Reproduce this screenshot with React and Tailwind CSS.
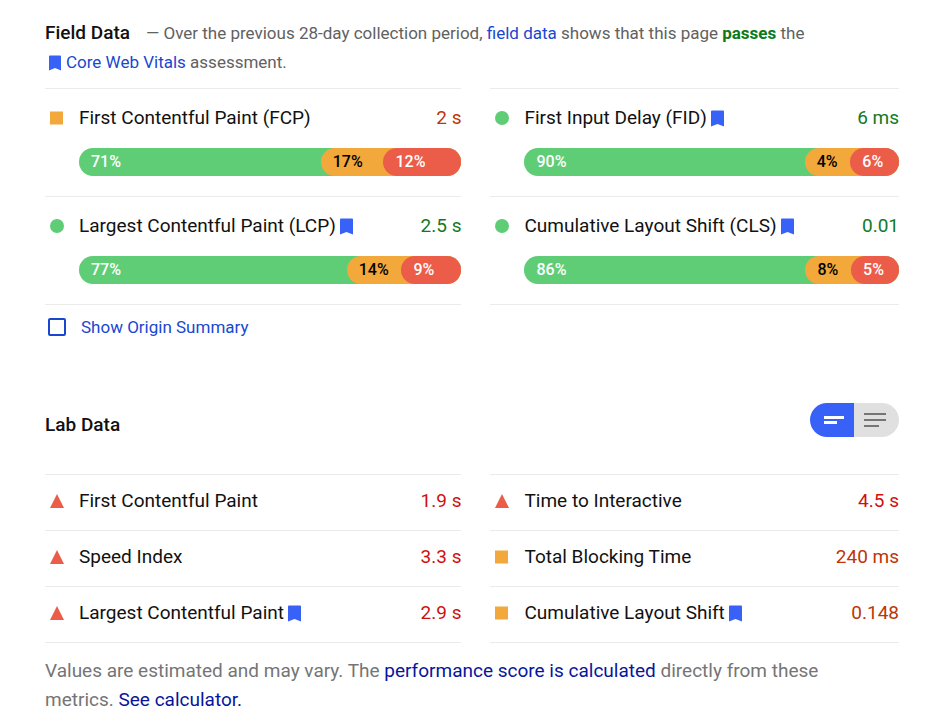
import { useState } from "react";
import clsx from "clsx";

// segments: [label, left edge of the segment in % of the bar]
const FIELD_METRICS = [
	{ name: "First Contentful Paint (FCP)", value: "2 s", rating: "average", bar: [["71%", 0], ["17%", 63.2], ["12%", 79.6]] },
	{ name: "First Input Delay (FID)", value: "6 ms", rating: "fast", vital: true, bar: [["90%", 0], ["4%", 74.8], ["6%", 87]] },
	{ name: "Largest Contentful Paint (LCP)", value: "2.5 s", rating: "fast", vital: true, bar: [["77%", 0], ["14%", 70], ["9%", 84.3]] },
	{ name: "Cumulative Layout Shift (CLS)", value: "0.01", rating: "fast", vital: true, bar: [["86%", 0], ["8%", 75], ["5%", 87.2]] },
];

const LAB_METRICS = [
	{ name: "First Contentful Paint", value: "1.9 s", rating: "slow" },
	{ name: "Time to Interactive", value: "4.5 s", rating: "slow" },
	{ name: "Speed Index", value: "3.3 s", rating: "slow" },
	{ name: "Total Blocking Time", value: "240 ms", rating: "average" },
	{ name: "Largest Contentful Paint", value: "2.9 s", rating: "slow", vital: true },
	{ name: "Cumulative Layout Shift", value: "0.148", rating: "average", vital: true },
];

const VALUE_COLORS = {
	fast: "text-[#0f7a1f]",
	average: "text-[#bd3508]",
	slow: "text-[#d01010]",
};

function Bookmark({ className }) {
	return (
		<svg viewBox="0 0 13 17" className={clsx("inline-block shrink-0 fill-[#3862f7]", className)} aria-hidden="true">
			<path d="M1 0.5h11q1 0 1 1V16.5L6.5 14L0 16.5V1.5q0-1 1-1z" />
		</svg>
	);
}

function RatingIcon({ rating }) {
	return (
		<svg viewBox="0 0 14 14" className="w-[14px] h-[14px] shrink-0" aria-hidden="true">
			{rating === "fast" && <circle cx="7" cy="7" r="7" fill="#5fcd76" />}
			{rating === "average" && <rect x="0" y="0.5" width="13" height="13" fill="#f2a83b" />}
			{rating === "slow" && <path d="M7 0L14 14H0z" fill="#eb5c49" />}
		</svg>
	);
}

function MetricHeader({ metric }) {
	return (
		<div className="flex items-center pl-[5px] text-[19px] leading-7">
			<RatingIcon rating={metric.rating} />
			<span className="flex flex-1 items-center gap-1 ml-[15px] text-[#111]">
				{metric.name}
				{metric.vital && <Bookmark className="w-[13px] h-[17px]" />}
			</span>
			<span className={VALUE_COLORS[metric.rating]}>{metric.value}</span>
		</div>
	);
}

function DistributionBar({ segments }) {
	const [good, medium, poor] = segments;
	const tail = 100 - medium[1];
	const poorWidth = ((100 - poor[1]) / tail) * 100;

	return (
		<div className="flex h-7 ml-[34px] rounded-full bg-[#5fcd76] text-base leading-7 font-medium text-white">
			<span className="flex-1 pl-3">{good[0]}</span>
			<div className="flex rounded-full bg-[#f2a83b]" style={{ width: `${tail}%` }}>
				<span className="flex-1 pl-3 text-black">{medium[0]}</span>
				<span className="rounded-full bg-[#eb5c49] pl-3" style={{ width: `${poorWidth}%` }}>
					{poor[0]}
				</span>
			</div>
		</div>
	);
}

export default function App() {
	const [showOrigin, setShowOrigin] = useState(false);
	const [expanded, setExpanded] = useState(false);

	return (
		<main className="bg-white pl-[45px] pr-[27px] pt-[18px] pb-2 font-[Roboto,sans-serif]">
			<section>
				<div className="text-[17px] leading-[29px] text-[#616161] mb-[11px]">
					<h2 className="inline text-[19px] font-medium text-[#111] mr-4">Field Data</h2>
					— Over the previous 28-day collection period,{" "}
					<a href="#field-data" className="text-[#1947d1]">field data</a> shows that this page{" "}
					<strong className="font-bold text-[#0b7a17]">passes</strong> the
					<br />
					<Bookmark className="w-[12px] h-[16px] ml-1 mr-[5px] align-[-3px]" />
					<a href="#vitals" className="text-[#1947d1]">Core Web Vitals</a> assessment.
				</div>

				<div className="grid grid-cols-[417fr_409fr] gap-x-[29px]">
					{FIELD_METRICS.map((metric, i) => (
						<div
							key={metric.name}
							className={clsx("border-t border-[#ebebeb] pt-[15px] pb-5", i > 1 && "border-b")}
						>
							<MetricHeader metric={metric} />
							<div className="h-4" />
							<DistributionBar segments={metric.bar} />
						</div>
					))}
				</div>

				<label className="inline-flex items-center gap-[15px] mt-2 pl-[3px] text-[17px] leading-7 text-[#1947d1]">
					<input
						type="checkbox"
						checked={showOrigin}
						onChange={(e) => setShowOrigin(e.target.checked)}
						className="appearance-none w-[18px] h-[18px] border-2 border-[#1947d1] rounded-xs checked:bg-[#1947d1]"
					/>
					Show Origin Summary
				</label>
			</section>

			<section className="mt-[60px]">
				<div className="flex items-start justify-between mb-[35px]">
					<h2 className="text-[19px] leading-7 font-medium text-[#111] mt-2">Lab Data</h2>
					<div className="flex rounded-full overflow-hidden">
						<button
							type="button"
							aria-label="Compact view"
							aria-pressed={!expanded}
							onClick={() => setExpanded(false)}
							className="flex items-center justify-center w-[44px] h-[34px] bg-[#3862f7]"
						>
							<svg viewBox="0 0 22 12" className="w-[22px] h-[12px] fill-white ml-1">
								<path d="M1 2h20v3H1zM1 7h13v3H1z" />
							</svg>
						</button>
						<button
							type="button"
							aria-label="Expanded view"
							aria-pressed={expanded}
							onClick={() => setExpanded(true)}
							className="flex items-center justify-center w-[45px] h-[34px] bg-[#e0e0e0]"
						>
							<svg viewBox="0 0 22 16" className="w-[22px] h-[16px] fill-[#757575] mr-1">
								<path d="M0 1h22v2H0zM0 7h22v2H0zM0 13h15v2H0z" />
							</svg>
						</button>
					</div>
				</div>

				<div className="grid grid-cols-[417fr_409fr] gap-x-[29px]">
					{LAB_METRICS.map((metric, i) => (
						<div
							key={metric.name}
							className={clsx("border-t border-[#ebebeb] pt-3 pb-[15px]", i > 3 && "border-b")}
						>
							<MetricHeader metric={metric} />
						</div>
					))}
				</div>

				<p className="mt-[13px] text-[19px] leading-[29px] text-[#757575]">
					Values are estimated and may vary. The{" "}
					<a href="#score" className="text-[#06169c]">performance score is calculated</a> directly from these
					<br />
					metrics. <a href="#calculator" className="text-[#06169c]">See calculator.</a>
				</p>
			</section>
		</main>
	);
}
